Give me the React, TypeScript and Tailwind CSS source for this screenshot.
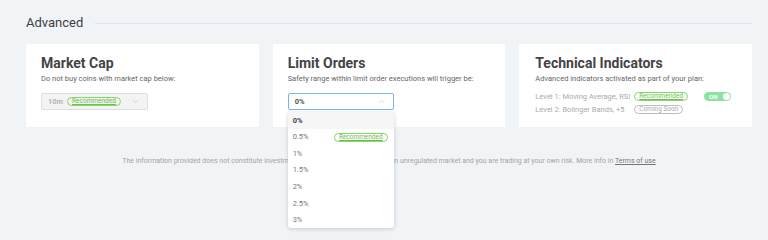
import { ChevronDown, ChevronUp } from "lucide-react";

const Badge = ({ label, muted }: { label: string; muted?: boolean }) => (
  <span
    className={
      muted
        ? "inline-flex h-[9px] items-center rounded-full border border-[#bdbdbd] px-[4px] text-[6.5px] leading-none text-[#aaa]"
        : "inline-flex h-[9px] items-center rounded-full border-[1.5px] border-[#86d66a] px-[4px] text-[6.5px] leading-none text-[#6cc04a] underline"
    }
  >
    {label}
  </span>
);

const options = ["0%", "0.5%", "1%", "1.5%", "2%", "2.5%", "3%"];

const App = () => {
  return (
    <div
      className="h-[240px] w-[768px] overflow-hidden bg-[#f1f4f7] pl-[26px] pr-[16px] pt-[14px]"
      style={{ fontFamily: "Roboto, 'Liberation Sans', sans-serif" }}
    >
      <div className="flex h-[18px] items-center">
        <h1 className="text-[13px] text-[#3e3e3e]">Advanced</h1>
        <div className="ml-[12px] h-[1px] flex-1 bg-[#dfe2e6]" />
      </div>

      <div className="mt-[12px] grid grid-cols-3 gap-[14px]">
        <div className="h-[83px] bg-white px-[15px] pt-[10px]">
          <h2 className="text-[14px] font-bold leading-[18px] text-[#444]">Market Cap</h2>
          <p className="mt-[2px] text-[7.5px] leading-[10px] text-[#666]">
            Do not buy coins with market cap below:
          </p>
          <div className="mt-[9px] flex h-[17px] w-[107px] items-center rounded-[2px] border border-[#dedede] bg-[#f3f3f3] pl-[6px] pr-[7px]">
            <span className="mr-[4px] text-[7.5px] font-bold text-[#b5b5b5]">10m</span>
            <Badge label="Recommended" />
            <ChevronDown className="ml-auto text-[#bbb]" size={9} strokeWidth={1.5} />
          </div>
        </div>

        <div className="relative h-[83px] bg-white px-[15px] pt-[10px]">
          <h2 className="text-[14px] font-bold leading-[18px] text-[#444]">Limit Orders</h2>
          <p className="mt-[2px] text-[7.5px] leading-[10px] text-[#666]">
            Safety range within limit order executions will trigger be:
          </p>
          <div className="mt-[9px] flex h-[17px] w-[106px] items-center rounded-[2px] border border-[#7ab4f5] bg-white pl-[6px] pr-[7px]">
            <span className="text-[7.5px] font-bold text-[#555]">0%</span>
            <ChevronUp className="ml-auto text-[#bbb]" size={9} strokeWidth={1.5} />
          </div>
          <div className="absolute left-[15px] top-[68px] z-10 w-[106px] rounded-[3px] bg-white py-0 shadow-[0_1px_4px_rgba(0,0,0,0.18)]">
            {options.map((o, i) => (
              <div
                key={o}
                className={
                  "flex h-[16.6px] items-center pl-[5px] pr-[6px] text-[7.5px] " +
                  (i === 0 ? "bg-[#f6f6f6] font-bold text-[#444]" : "text-[#777]")
                }
              >
                <span>{o}</span>
                {i === 1 && (
                  <span className="ml-auto">
                    <Badge label="Recommended" />
                  </span>
                )}
              </div>
            ))}
          </div>
        </div>

        <div className="h-[83px] bg-white px-[16px] pt-[10px]">
          <h2 className="text-[14px] font-bold leading-[18px] text-[#444]">Technical Indicators</h2>
          <p className="mt-[2px] text-[7.5px] leading-[10px] text-[#666]">
            Advanced indicators activated as part of your plan:
          </p>
          <div className="mt-[6px] flex h-[13px] items-center">
            <span className="w-[99px] text-[7.5px] text-[#aaa]">Level 1: Moving Average, RSI</span>
            <Badge label="Recommended" />
            <div className="ml-[16px] flex h-[9px] w-[27px] items-center justify-between rounded-full bg-[#8de2a3] pl-[5px] pr-[1px]">
              <span className="text-[6px] font-bold leading-none text-white">ON</span>
              <span className="h-[7px] w-[7px] rounded-full bg-white" />
            </div>
          </div>
          <div className="flex h-[13px] items-center">
            <span className="w-[99px] text-[7.5px] text-[#aaa]">Level 2: Bolinger Bands, +5</span>
            <Badge label="Coming Soon" muted />
          </div>
        </div>
      </div>

      <p className="mt-[29px] text-center text-[7px] text-[#a3a3a3]">
        The information provided does not constitute investment advice. Cryptocurrencies are an unregulated market and you are trading at your own risk. More info in{" "}
        <span className="text-[#777] underline">Terms of use</span>
      </p>
    </div>
  );
};

export default App;
